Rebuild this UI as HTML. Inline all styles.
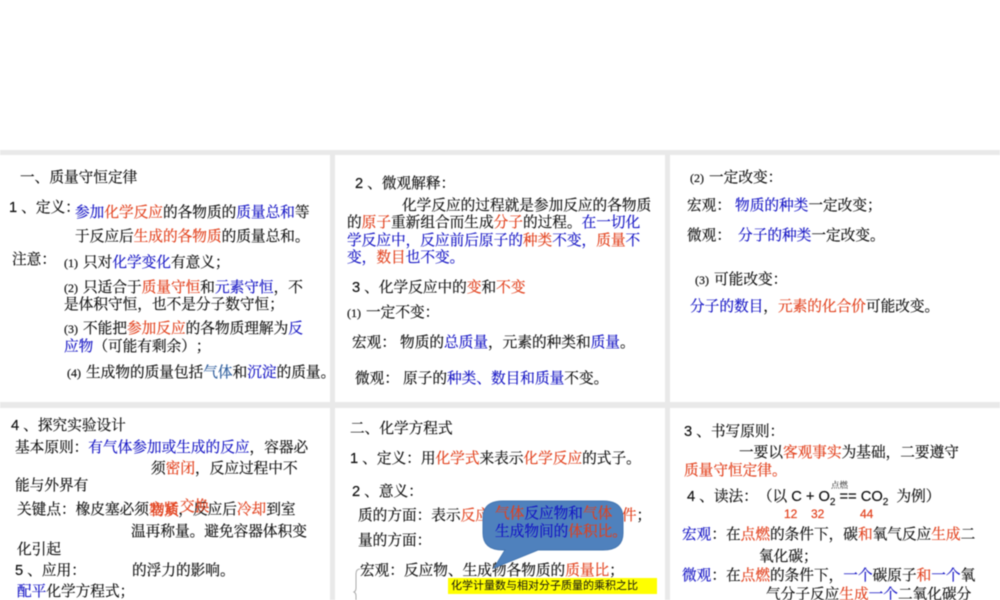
<!DOCTYPE html>
<html lang="zh">
<head>
<meta charset="utf-8">
<title>质量守恒定律</title>
<style>
html,body{margin:0;padding:0;width:1000px;height:600px;overflow:hidden;background:#fff}
#s{position:relative;width:1000px;height:600px;overflow:hidden;background:#fff;filter:blur(.4px);
font-family:"Liberation Sans","Noto Serif CJK SC",serif;font-size:14.67px;color:#111;text-spacing-trim:space-all}
.g{position:absolute;background:#e9e9e9}
.l{position:absolute;white-space:nowrap;line-height:20px;height:20px;margin-top:1px;-webkit-text-stroke:.2px currentColor}
.b{color:#1414c4}.r{color:#e2401c}.t{color:#2c5c9c}
.n{display:inline-block;width:19px;font-family:"Liberation Serif",serif;font-size:12px}
sub{font-size:10px;line-height:0}
svg{position:absolute;left:0;top:0}
</style>
</head>
<body>
<div id="s">
<div class="g" style="left:0;top:150px;width:1000px;height:5px"></div>
<div class="g" style="left:0;top:402px;width:1000px;height:6px"></div>
<div class="g" style="left:330px;top:150px;width:5px;height:450px"></div>
<div class="g" style="left:665px;top:150px;width:5px;height:450px"></div>

<div class="l" style="left:20px;top:167px">一、质量守恒定律</div>
<div class="l" style="left:9px;top:197px">1 、定义&#xFF1A;</div>
<div class="l" style="left:75px;top:202px"><span class="b">参加</span><span class="r">化学反应</span>的各物质的<span class="b">质量总和</span>等</div>
<div class="l" style="left:75px;top:226px">于反应后<span class="r">生成的各物质</span>的质量总和。</div>
<div class="l" style="left:12px;top:249px">注意&#xFF1A;</div>
<div class="l" style="left:64px;top:252px"><span class="n">(1)</span>只对<span class="b">化学变化</span>有意义&#xFF1B;</div>
<div class="l" style="left:64px;top:277px"><span class="n">(2)</span>只适合于<span class="r">质量守恒</span>和<span class="b">元素守恒</span>&#xFF0C;不</div>
<div class="l" style="left:64px;top:294px">是体积守恒&#xFF0C;也不是分子数守恒&#xFF1B;</div>
<div class="l" style="left:64px;top:318px"><span class="n">(3)</span>不能把<span class="r">参加反应</span>的各物质理解为<span class="b">反</span></div>
<div class="l" style="left:64px;top:336px"><span class="b">应物</span>&#xFF08;可能有剩余&#xFF09;&#xFF1B;</div>
<div class="l" style="left:67px;top:362px"><span class="n">(4)</span>生成物的质量包括<span class="t">气体</span>和<span class="b">沉淀</span>的质量。</div>

<div class="l" style="left:355px;top:173px">2 、微观解释&#xFF1A;</div>
<div class="l" style="left:402px;top:195px">化学反应的过程就是参加反应的各物质</div>
<div class="l" style="left:347px;top:212px">的<span class="r">原子</span>重新组合而生成<span class="r">分子</span>的过程。<span class="b">在一切化</span></div>
<div class="l" style="left:347px;top:230px"><span class="b">学反应中&#xFF0C;反应前后原子的</span><span class="r">种类</span><span class="b">不变&#xFF0C;</span><span class="r">质量</span><span class="b">不</span></div>
<div class="l" style="left:347px;top:247px"><span class="b">变&#xFF0C;</span><span class="r">数目</span><span class="b">也不变。</span></div>
<div class="l" style="left:352px;top:277px">3 、化学反应中的<span class="r">变</span>和<span class="r">不变</span></div>
<div class="l" style="left:347px;top:302px"><span class="n">(1)</span>一定不变&#xFF1A;</div>
<div class="l" style="left:352px;top:332px">宏观&#xFF1A; 物质的<span class="b">总质量</span>&#xFF0C;元素的种类和<span class="b">质量</span>。</div>
<div class="l" style="left:355px;top:368px">微观&#xFF1A; 原子的<span class="b">种类、数目和质量</span>不变。</div>

<div class="l" style="left:690px;top:167px"><span class="n">(2)</span>一定改变&#xFF1A;</div>
<div class="l" style="left:687px;top:195px">宏观&#xFF1A; <span class="b">物质的种类</span>一定改变&#xFF1B;</div>
<div class="l" style="left:687px;top:225px">微观&#xFF1A; <span class="b" style="margin-left:3px">分子的种类</span>一定改变。</div>
<div class="l" style="left:695px;top:269px"><span class="n">(3)</span>可能改变&#xFF1A;</div>
<div class="l" style="left:690px;top:296px"><span class="b">分子的数目</span>&#xFF0C;<span class="r">元素的化合价</span>可能改变。</div>

<div class="l" style="left:11px;top:415px">4 、探究实验设计</div>
<div class="l" style="left:15px;top:437px">基本原则&#xFF1A;<span class="b">有气体参加或生成的反应</span>&#xFF0C;容器必</div>
<div class="l" style="left:151px;top:458px">须<span class="r">密闭</span>&#xFF0C;反应过程中不</div>
<div class="l" style="left:15px;top:475px">能与外界有</div>
<div class="l" style="left:17px;top:499px">关键点&#xFF1A;橡皮塞必须<span class="r">塞紧</span>&#xFF0C;反应后<span class="r">冷却</span>到室</div>
<div class="l r" style="left:150px;top:500px">物质</div>
<div class="l r" style="left:180px;top:496px">交换</div>
<div class="l" style="left:131px;top:521px">温再称量。避免容器体积变</div>
<div class="l" style="left:17px;top:539px">化引起</div>
<div class="l" style="left:15px;top:560px">5 、应用&#xFF1A;</div>
<div class="l" style="left:132px;top:560px">的浮力的影响。</div>
<div class="l" style="left:17px;top:581px"><span class="b">配平</span>化学方程式&#xFF1B;</div>

<div class="l" style="left:350px;top:418px">二、化学方程式</div>
<div class="l" style="left:350px;top:448px">1 、定义&#xFF1A;用<span class="r">化学式</span>来表示<span class="r">化学反应</span>的式子。</div>
<div class="l" style="left:352px;top:481px">2 、意义&#xFF1A;</div>
<div class="l" style="left:358px;top:505px">质的方面&#xFF1A;表示<span class="r">反应物、生成物及反应条件</span>&#xFF1B;</div>
<div class="l" style="left:358px;top:530px">量的方面&#xFF1A;</div>
<div class="l" style="left:360px;top:560px">宏观&#xFF1A;反应物、生成物各物质的<span class="r">质量比</span>&#xFF1B;</div>
<svg width="1000" height="600" viewBox="0 0 1000 600">
<path d="M360 569Q356 569 356 574V588Q356 591 354 592Q356 593 356 596V600" fill="none" stroke="#aaa"/>
<path d="M503 501H603Q623 501 623 518V533Q623 550 603 550H538L494 568L505 550H503Q483 550 483 533V518Q483 501 503 501Z" fill="#4f81bd" stroke="#4576b0"/>
<rect x="448" y="578" width="209" height="16" fill="#ffff00"/>
</svg>
<div class="l" style="left:495px;top:503px"><span class="r">气体</span><span class="b">反应物和</span><span class="r">气体</span></div>
<div class="l" style="left:495px;top:521px"><span class="b">生成物间的</span><span class="r">体积比。</span></div>
<div class="l" style="left:451px;top:575px;font-size:11px;font-family:'Liberation Sans','Noto Sans CJK SC',sans-serif;-webkit-text-stroke:0">化学计量数与相对分子质量的乘积之比</div>

<div class="l" style="left:684px;top:421px">3 、书写原则&#xFF1A;</div>
<div class="l" style="left:739px;top:442px">一要以<span class="r">客观事实</span>为基础&#xFF0C;二要遵守</div>
<div class="l r" style="left:684px;top:460px">质量守恒定律。</div>
<div class="l" style="left:687px;top:486px">4 、读法&#xFF1A;&#xFF08;以 C + O<sub>2</sub> == CO<sub>2</sub> &nbsp;为例&#xFF09;</div>
<div class="l" style="left:831px;top:474px;font-size:8.5px;-webkit-text-stroke:0">点燃</div>
<div class="l r" style="left:784px;top:503px;font-size:12px">12</div>
<div class="l r" style="left:811px;top:503px;font-size:12px">32</div>
<div class="l r" style="left:860px;top:503px;font-size:12px">44</div>
<div class="l" style="left:682px;top:524px"><span class="b">宏观</span>&#xFF1A;在<span class="r">点燃</span>的条件下&#xFF0C;碳<span class="r">和</span>氧气反应<span class="r">生成</span>二</div>
<div class="l" style="left:759px;top:546px">氧化碳&#xFF1B;</div>
<div class="l" style="left:682px;top:565px"><span class="b">微观</span>&#xFF1A;在<span class="r">点燃</span>的条件下&#xFF0C;<span class="b">一个</span>碳原子<span class="r">和</span><span class="b">一个</span>氧</div>
<div class="l" style="left:766px;top:584px">气分子反应<span class="r">生成</span><span class="b">一个</span>二氧化碳分</div>
</div>
</body>
</html>
